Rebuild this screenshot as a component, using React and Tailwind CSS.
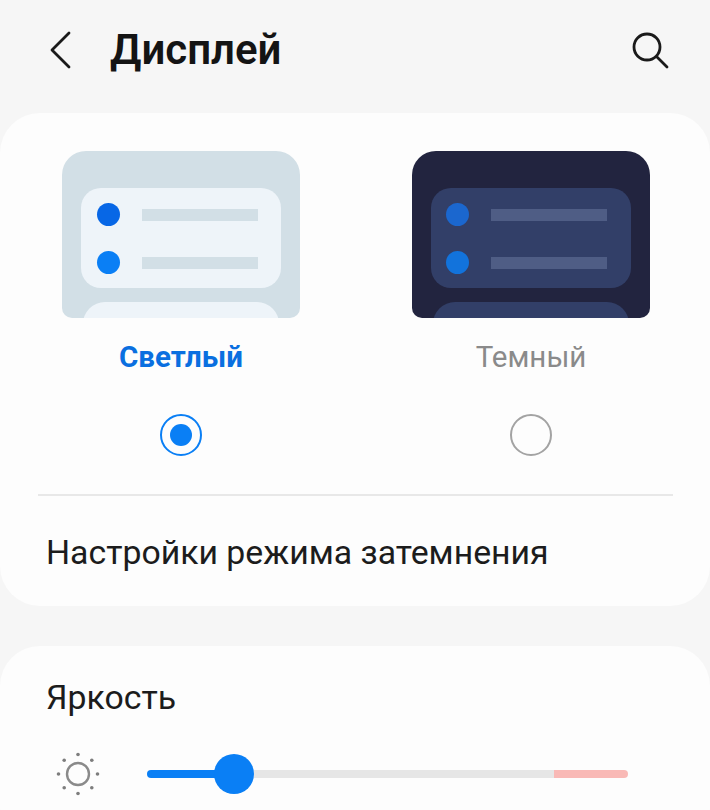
import React from 'react';

const font = { fontFamily: 'Roboto, sans-serif' };

const Preview = ({ dark }) => {
  const frame = dark ? 'bg-[#22243f]' : 'bg-[#d2dfe6]';
  const panel = dark ? 'bg-[#323f68] pl-[15px]' : 'bg-[#eef4f9] pl-[16px]';
  const lower = dark ? 'bg-[#323f68]' : 'bg-[#eef4f9]';
  const bar = dark ? 'bg-[#4f5d85]' : 'bg-[#d2dfe6]';
  const dotA = dark ? 'bg-[#1b67cf]' : 'bg-[#0767e6]';
  const dotB = dark ? 'bg-[#1273dc]' : 'bg-[#0a7ff5]';
  return (
    <div className={`flex h-[167px] w-[238px] flex-col items-center overflow-hidden rounded-t-[24px] rounded-b-[10px] pt-[37px] ${frame}`}>
      <div className={`flex h-[100px] w-[200px] shrink-0 flex-col gap-[25px] rounded-[20px] pt-[15px] ${panel}`}>
        <div className="flex items-center gap-[22px]">
          <span className={`h-[23px] w-[23px] rounded-full ${dotA}`} />
          <span className={`h-[12px] w-[116px] ${bar}`} />
        </div>
        <div className="flex items-center gap-[22px]">
          <span className={`h-[23px] w-[23px] rounded-full ${dotB}`} />
          <span className={`h-[12px] w-[116px] ${bar}`} />
        </div>
      </div>
      <div className={`mt-[14px] h-[30px] w-[196px] shrink-0 rounded-t-[22px] ${lower}`} />
    </div>
  );
};

const Option = ({ dark, label, selected }) => (
  <div className="flex w-[238px] flex-col items-center">
    <Preview dark={dark} />
    <p className={`mt-[22px] text-[29.5px] leading-[34px] ${selected ? 'font-bold text-[#0a6fe0]' : 'text-[#8a8a8a]'}`}>{label}</p>
    {selected ? (
      <span className="mt-[40px] flex h-[42px] w-[42px] items-center justify-center rounded-full border-2 border-[#0a7ff5]">
        <span className="h-[22px] w-[22px] rounded-full bg-[#0a7ff5]" />
      </span>
    ) : (
      <span className="mt-[40px] h-[42px] w-[42px] rounded-full border-2 border-[#a3a3a3]" />
    )}
  </div>
);

const Sun = () => (
  <svg width="44" height="44" viewBox="0 0 44 44" className="shrink-0">
    <circle cx="22" cy="22" r="11" fill="none" stroke="#8a8a8a" strokeWidth="2.4" />
    {[[22, 2.5], [22, 41.5], [2.5, 22], [41.5, 22], [8.2, 8.2], [35.8, 8.2], [8.2, 35.8], [35.8, 35.8]].map(([cx, cy]) => (
      <circle key={`${cx}-${cy}`} cx={cx} cy={cy} r="1.8" fill="#7d7d7d" />
    ))}
  </svg>
);

const App = () => {
  return (
    <div className="h-[810px] w-[710px] overflow-hidden bg-[#f6f6f6]" style={font}>
      <header className="flex h-[113px] items-center pr-[41px] pb-[14px] pl-[48px]">
        <svg width="24" height="38" viewBox="0 0 24 38" fill="none" stroke="#1a1a1a" strokeWidth="2.8" strokeLinecap="round" strokeLinejoin="round" className="shrink-0">
          <path d="M21 2 L4 19 L21 36" />
        </svg>
        <h1 className="ml-[38px] flex-1 text-[42px] leading-[46px] font-semibold text-[#141414]">Дисплей</h1>
        <svg width="38" height="38" viewBox="0 0 38 38" fill="none" stroke="#1a1a1a" strokeWidth="2.8" strokeLinecap="round" className="shrink-0">
          <circle cx="16" cy="16" r="13" />
          <path d="M26 26 L36 36" />
        </svg>
      </header>

      <section className="h-[493px] rounded-[40px] bg-[#fdfdfd] pt-[38px]">
        <div className="flex justify-between pr-[60px] pl-[62px]">
          <Option label="Светлый" selected />
          <Option dark label="Темный" />
        </div>
        <div className="mt-[38px] ml-[38px] h-[2px] w-[635px] bg-[#e8e8e8]" />
        <p className="mt-[38px] pl-[46px] text-[33.8px] leading-[38px] text-[#1c1c1c]">Настройки режима затемнения</p>
      </section>

      <section className="mt-[40px] h-[200px] rounded-[40px] bg-[#fdfdfd] pt-[33px] pl-[46px]">
        <p className="text-[33.8px] leading-[38px] text-[#1c1c1c]">Яркость</p>
        <div className="mt-[35px] flex items-center">
          <div className="ml-[10px]"><Sun /></div>
          <div className="ml-[47px] flex h-[8px] w-[481px] items-center">
            <div className="h-full w-[87px] rounded-l-full bg-[#0a7ff5]" />
            <div className="-ml-[20px] h-[40px] w-[40px] shrink-0 rounded-full bg-[#0a7ff5]" />
            <div className="h-full w-[300px] bg-[#e6e6e6]" />
            <div className="h-full flex-1 rounded-r-full bg-[#f9b9b6]" />
          </div>
        </div>
      </section>
    </div>
  );
};

export default App;
